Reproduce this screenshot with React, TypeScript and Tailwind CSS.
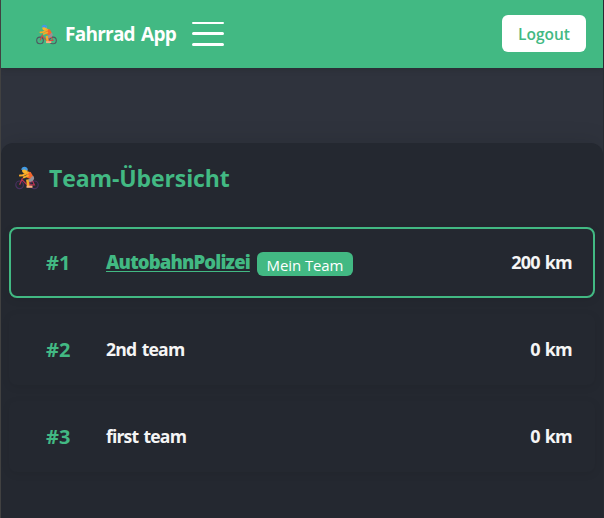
type Team = { rank: number; name: string; km: number; mine?: boolean; nameClass: string };

const teams: Team[] = [
  { rank: 1, name: 'AutobahnPolizei', km: 200, mine: true, nameClass: 'w-[144px] text-[18.5px] font-extrabold text-[#42b983] underline decoration-1 underline-offset-2 tracking-[-0.85px]' },
  { rank: 2, name: '2nd team', km: 0, nameClass: 'text-[17.6px] font-bold text-[#f5f5f5] tracking-[-0.8px] [word-spacing:1.5px]' },
  { rank: 3, name: 'first team', km: 0, nameClass: 'text-[17.6px] font-bold text-[#f5f5f5] tracking-[-0.85px] [word-spacing:1.5px]' },
];

function Cyclist({ wheel, frame, className }: { wheel: string; frame: string; className: string }) {
  return (
    <svg viewBox="0 0 24 24" fill="none" className={className}>
      <circle cx="4.6" cy="18.8" r="3.8" stroke={wheel} strokeWidth="1.2" />
      <circle cx="19.4" cy="18.8" r="3.8" stroke={wheel} strokeWidth="1.2" />
      <path d="M4.6 18.8 7.5 12M7.2 13.8l5.4 5.6 4.2-5.4M16.5 13l2.9 5.8h-6.8" stroke={frame} strokeWidth="1.2" />
      <path d="M11.5 5.5 15.7 6l2.6 4.5-1.8 3-5-2Z" fill="#f4672c" />
      <path d="M13 6.5 8 9.2l-3 .4M8.8 11.4l4.2-1.8" stroke="#f7a928" strokeWidth="2" strokeLinecap="round" />
      <path d="M16.9 10.8c1.5 1.8-.2 3.9-3.6 3.7" stroke="#969199" strokeWidth="3.2" />
      <path d="m12.3 13.5 1 6.5" stroke="#f7a928" strokeWidth="2.5" />
      <path d="M11.5 20.7h6" stroke="#ffad83" strokeWidth="2.2" />
      <circle cx="9.8" cy="4.6" r="2.7" fill="#fbb52c" />
      <path d="M6.3 4.1C6.1.1 12.2-.3 12.8 3.4l-1.2 1.4-1.8-1.2Z" fill="#429be5" />
    </svg>
  );
}

function Row({ team }: { team: Team }) {
  return (
    <li
      className={`flex h-[71px] items-center rounded-lg border-2 pl-[35px] pr-[21px] shadow-[0_2px_8px_rgba(0,0,0,0.08)] ${
        team.mine ? 'border-[#42b983]' : 'border-transparent'
      }`}
    >
      <span className="w-[60px] text-[20px] leading-7 font-bold text-[#42b983]">#{team.rank}</span>
      <span className={`-mt-px leading-7 whitespace-nowrap ${team.nameClass}`}>{team.name}</span>
      {team.mine && (
        <span className="mt-[3px] ml-[7px] flex h-6 w-24 items-center justify-center rounded-md bg-[#42b983] pt-px text-[15px] leading-5 tracking-[-0.1px] whitespace-nowrap text-white">
          Mein Team
        </span>
      )}
      <span className="-mt-px ml-auto text-[18px] leading-7 font-bold tracking-[-0.8px] text-[#f5f5f5] [word-spacing:1.2px]">{team.km} km</span>
    </li>
  );
}

export default function App() {
  return (
    <div className="flex h-[518px] w-[604px] flex-col overflow-hidden border-r border-l border-r-[#272a31] border-l-[#414141] bg-[#2f333d] font-['Open_Sans','Noto_Sans',sans-serif]">
      <header className="flex h-[68px] shrink-0 items-center bg-[#42b983] pr-[17px] pl-[35px] shadow-[0_2px_6px_rgba(0,0,0,0.12)]">
        <Cyclist wheel="#50565f" frame="#d44745" className="h-[21px] w-[21px]" />
        <h1 className="ml-[8px] w-[111px] text-[19px] leading-7 font-bold tracking-[-0.75px] whitespace-nowrap text-white [word-spacing:2px]">Fahrrad App</h1>
        <button aria-label="Menu" className="ml-4 flex h-6 w-8 flex-col justify-between">
          <span className="h-[2px] w-full rounded bg-white" />
          <span className="h-[3px] w-full rounded bg-white" />
          <span className="h-[3px] w-full rounded bg-white" />
        </button>
        <button className="-mt-px ml-auto h-[37px] w-[84px] rounded-md bg-white pt-px text-[15.5px] leading-5 font-semibold text-[#42b983]">Logout</button>
      </header>
      <main className="mt-[75px] flex-1 rounded-t-xl bg-[#242830] px-2 pt-[18px] shadow-[0_0_24px_rgba(0,0,0,0.12)]">
        <h2 className="flex h-[34px] items-center pl-[6px] text-[23px] leading-[34px] font-bold text-[#42b983]">
          <Cyclist wheel="#493060" frame="#bd3052" className="h-6 w-6" />
          <span className="ml-[10px] tracking-[-0.1px] whitespace-nowrap">Team-Übersicht</span>
        </h2>
        <ul className="mt-[32px] flex flex-col gap-4">
          {teams.map((team) => (
            <Row key={team.rank} team={team} />
          ))}
        </ul>
      </main>
    </div>
  );
}
